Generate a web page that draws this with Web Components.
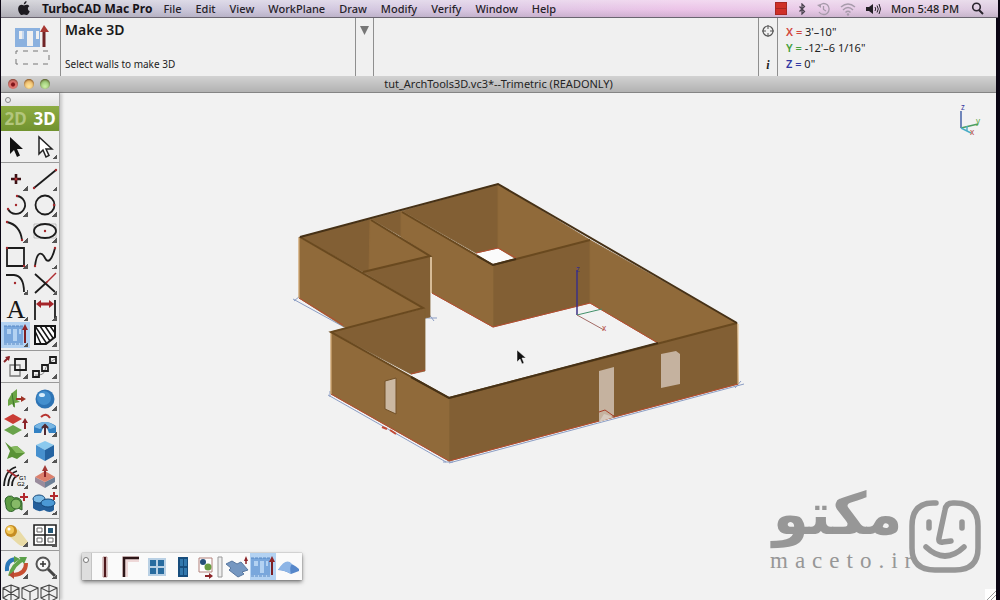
<!DOCTYPE html>
<html lang="en">
<head>
<meta charset="utf-8">
<title>TurboCAD Mac Pro</title>
<style>
html, body { height: 100%; }
body { margin: 0; background: #0b0614; overflow: hidden; font-family: "Noto Sans", "Open Sans", sans-serif; font-size: 11px; color: #222; }
</style>
</head>
<body>
<cad-app></cad-app>
<script>
const define = (name, html, setup) => {
  const tpl = document.createElement('template');
  tpl.innerHTML = html;
  customElements.define(name, class extends HTMLElement {
    connectedCallback() {
      if (this.shadowRoot) return;
      this.attachShadow({ mode: 'open' }).append(tpl.content.cloneNode(true));
      if (setup) setup(this, this.shadowRoot);
    }
  });
};

/* Icon artwork, drawn around the origin in a 28 x 26 box */
const K = 'fill="none" stroke="#1c1c1c" stroke-width="1.8"';
const dot = (x, y) => `<circle cx="${x}" cy="${y}" r="1.2" fill="#a3262a"/>`;
const cube = (x, y, s, a, b, c) => `<g transform="translate(${x} ${y}) scale(${s})"><path d="M0-10 9-6 0-1-9-6z" fill="${a}"/><path d="M-9-6 0-1V10L-9 5z" fill="${b}"/><path d="M9-6 0-1V10L9 5z" fill="${c}"/></g>`;
const wire = extra => `<path d="M0-8 8-5V5L0 9-8 5V-5z${extra}" fill="none" stroke="#444" stroke-width="1.1"/>`;
const make3d = `<path fill-rule="evenodd" d="M-12-9H7V8H-12zM-9-6V-1H-5V-6zM-3-6V6H1V-6zM3-6V-1H5V-6z" fill="#79a7dc"/><path d="M-12-9H8M-12 9H8" stroke="#5688c4" stroke-dasharray="3 1"/><path d="M9 8V-6" stroke="#7d1f22" stroke-width="2"/><path d="M9-11 12-5H6z" fill="#8e2528"/>`;
const art = {
  select: `<path d="M-6-10V7L-2 3 1 10 4 8.500 1 2H7z" fill="#111"/>`,
  direct: `<path d="M-6-10V7L-2 3 1 10 4 8.500 1 2H7z" fill="#fff" stroke="#222" stroke-width="1.500"/>`,
  point: `<path d="M0-5V5M-5 0H5" stroke="#3a1114" stroke-width="2.600"/><circle r="1.5" fill="#b23034"/>`,
  line: `<path d="M-11 9 11-9" ${K}/>${dot(-11,9)}${dot(11,-9)}`,
  arc: `<path d="M-8 4A9 9 0 1 0 1-9" ${K}/>${dot(0,0)}${dot(-8,4)}${dot(1,-9)}`,
  circle: `<circle r="9.500" ${K}/>${dot(9,0)}`,
  curve: `<path d="M-9-9Q4-6 6 9" ${K}/>${dot(-9,-9)}${dot(6,9)}`,
  ellipse: `<path d="M-11-7H11V7H-11z" fill="none" stroke="#aaa" stroke-width=".7"/><ellipse rx="11" ry="7" ${K}/>${dot(0,0)}`,
  rect: `<path d="M-9-9H8V9H-9z" ${K}/>${dot(-9,-9)}${dot(8,9)}`,
  spline: `<path d="M-10 9C-8-7-3-5 0 1S7 3 10-9" ${K}/>${dot(-10,9)}${dot(10,-9)}`,
  fillet: `<path d="M-10-8H-2Q8-7 8 9" ${K}/>${dot(-1,0)}`,
  trim: `<path d="M-10-9 10 9M-10 10 2-1" ${K}/><path d="M1 0 11-10" stroke="#b02e33" stroke-width="1.500"/>`,
  text: `<text y="9" text-anchor="middle" font-family="Liberation Serif, serif" font-size="26" fill="#151515">A</text>`,
  dimension: `<path d="M-10-9V11M10-9V11" ${K}/><path d="M-5-5H5" stroke="#a52429" stroke-width="3"/><path d="M-9-5-4-9V-1zM9-5 4-9V-1z" fill="#a52429"/>`,
  make3d,
  hatch: `<path d="M-10-9H10V2L1 9H-10z" fill="#fff" stroke="#151515" stroke-width="2"/><path d="M-10-4-4 9M-10-9 2 9M-5-9 5 6M0-9 8 3M5-9 10-2" stroke="#151515" stroke-width="1.500"/>`,
  copy: `<path d="M-6-2H4V9H-6z" fill="none" stroke="#777" stroke-width="1.3"/><path d="M-1-8H10V3H-1z" ${K}/><path d="M-12-5-7-10" stroke="#8b2428" stroke-width="2"/><path d="M-6-11-7-6-11-10z" fill="#8b2428"/>`,
  array: `<path d="M-10 8Q-1 9 0 3T10-8" fill="none" stroke="#888"/><path d="M-12 4H-6V10H-12zM-3-2H3V4H-3zM5-10H11V-4H5z" ${K}/>`,
  plane: `<path d="M-4-6 1-10V1L4 3-1 4V9L-4 5-8 7V1z" fill="#6ba545"/><path d="M-4-6-2 8" stroke="#3e762c"/><path d="M0 0H7" stroke="#9e3225" stroke-width="2"/><path d="M10 0 5-3V3z" fill="#9e3225"/>`,
  sphere: `<circle r="9.500" fill="#2d73b4"/><circle cx="-1" cy="-1" r="7" fill="#438fce"/><ellipse cx="-3" cy="-4" rx="3" ry="2" fill="#d8edfb"/>`,
  layers: `<path d="M-3 0 6 5-3 10-12 5z" fill="#69a34b"/><path d="M-3-11 6-6-3-1-12-6z" fill="#ca3c35"/><path d="M9 4V-3" stroke="#8b2428" stroke-width="2"/><path d="M9-7 12-2H6z" fill="#8b2428"/>`,
  revolve: `<path d="M-11 8V1Q0-7 11 1V8H4L2 3H-2L-4 8z" fill="#3281c3"/><path d="M-11 2Q0-8 11 2L5 4Q0-1-5 4z" fill="#78b6e3"/><path d="M0 10V1M-3 3 0 0 3 3" stroke="#512931" stroke-width="2" fill="none"/><path d="M-4-8Q1-13 5-7" fill="none" stroke="#b73430" stroke-width="2"/>`,
  surface: `<path d="M-11-9-5-4 1-5 9 2 1 8-4 6-9 8-6 0z" fill="#599236"/><path d="M-5-4 1-5 9 2 0 2z" fill="#85b95e"/>`,
  cube: cube(0, 0, 1, '#8bc9ee', '#4690ce', '#2463a1'),
  offset: `<path d="M-12 9Q-11-7 0-10M-8 9Q-7-4 1-6M-4 9Q-4 0 3-2" ${K}/><path d="M-9-7 1 0" stroke="#a52f31" stroke-width="2"/><text x="3" y="3" font-size="6">G1</text><text x="1" y="9" font-size="6">G2</text>`,
  extrude: `<path d="M-10 0 0 5V11L-10 5z" fill="#9a8c9d"/><path d="M10 0 0 5V11L10 5z" fill="#6d8097"/><path d="M0-6 10 0 0 5-10 0z" fill="#dc806d"/><path d="M0 0V-8" stroke="#8b2428" stroke-width="2"/><path d="M0-12 3-6H-3z" fill="#a33a36"/>`,
  boolean2d: `<path d="M-11-2A5 5 0 0 1-2-5 6 6 0 0 1 6 0V7L0 4A5 5 0 0 1-10 3z" fill="#5e9c44" stroke="#2d632a"/><circle cx="0" cy="1" r="5" fill="#86b967" stroke="#35692c"/><path d="M8-10V-2M4-6H12" stroke="#b1282d" stroke-width="2"/>`,
  boolean3d: `<path d="M-12-5V5Q-7 10-1 7 5 11 9 7V-3z" fill="#245f9a"/><ellipse cx="-6" cy="-4" rx="6" ry="4" fill="#7bbae5" stroke="#174a7b"/><ellipse cx="3" cy="0" rx="7" ry="4" fill="#4b99d5" stroke="#174a7b"/><path d="M9-11V-3M5-7H13" stroke="#b1282d" stroke-width="2"/>`,
  light: `<path d="M-6 2 2-6 12 7Q7 14 2 9z" fill="#e9dba6"/><circle cx="-5" cy="-4" r="6" fill="#c58d22"/><circle cx="-6" cy="-5" r="4" fill="#f2c758"/><circle cx="-7" cy="-6" r="1.500" fill="#fff"/>`,
  views: `<path d="M-11-10H11V10H-11zM0-10V10M-11 0H11" fill="#fff" stroke="#222" stroke-width="1.600"/><path d="M-8-7H-3V-3H-8zM-8 3H-3V7H-8zM3 3H8V7H3z" fill="none" stroke="#666"/><path d="M3-7H8V-2H3z" fill="#245777"/>`,
  orbit: `<path d="M-9 4Q-10-7 0-8" fill="none" stroke="#2a77b8" stroke-width="4"/><path d="M-6 9Q-3-3 8-8" fill="none" stroke="#62a44b" stroke-width="4"/><path d="M10-4Q10 7-2 8" fill="none" stroke="#c84f32" stroke-width="4"/><path d="M-2-11 4-8-2-4zM3-10H11L8-3z" fill="#5ba04a"/><path d="M-2 4V12L-7 8z" fill="#b84732"/>`,
  zoom: `<circle cx="-2" cy="-3" r="6.500" fill="#f8f8f8" stroke="#555" stroke-width="2"/><path d="M3 2 10 9" stroke="#444" stroke-width="3"/><path d="M-2-6V0M-5-3H1" stroke="#333" stroke-width="1.500"/>`,
  wireA: wire('M-8-5 8 5M8-5-8 5M0-8V9'),
  wireB: wire('M-8-5 0-1 8-5M0-1V9'),
  wireC: wire('M-8-5 0-1 8-5M0-1V9M0-8V1M-8 5 0 1 8 5'),
  wall: `<path d="M-2-10V10H2V-10z" fill="#e7dcdc" stroke="#a06b6b" stroke-width=".7"/><path d="M0-10V10" stroke="#4d171b" stroke-width="2"/>`,
  corner: `<path d="M-6 10V-8H8" fill="none" stroke="#eed8d8" stroke-width="6"/><path d="M-7 10V-9H8" fill="none" stroke="#2c1517" stroke-width="2.500"/>`,
  window: `<path d="M-9-9H9V9H-9z" fill="#b9d0e4"/><path d="M-7-7H-1V-1H-7zM1-7H7V-1H1zM-7 1H-1V7H-7zM1 1H7V7H1z" fill="#286b9f"/>`,
  door: `<path d="M-5-10H5V10H-5z" fill="#174d7d"/><path d="M-3-8H0V-1H-3zM1-8H4V-1H1zM-3 1H0V8H-3zM1 1H4V8H1z" fill="#3278ad"/>`,
  insert: `<path d="M-7-9H6V5H-7z" fill="#fff" stroke="#b1807b"/><circle cx="-3" cy="-5" r="3" fill="#254f7b"/><circle cx="2" cy="0" r="3.500" fill="#699c42"/><path d="M-1 9H4" stroke="#8b2428" stroke-width="2"/><path d="M7 9 3 6V12z" fill="#8b2428"/>`,
  slot: `<path d="M-2-10H2V10H-2z" fill="#eee" stroke="#999"/>`,
  slab: `<path d="M-11-3-5-6 0-3 4-5 11 3 5 5 7 7 1 10-8 3-6 1z" fill="#7597c1" stroke="#5877a0"/><path d="M9-3V-8" stroke="#8b2428" stroke-width="1.500"/><path d="M9-11 11-6H7z" fill="#8b2428"/>`,
  roof: `<path d="M-11 3Q-3-10 10 2L10 4 2 7Q-5 3-11 3z" fill="#5687ca"/><path d="M-11 3Q-3-10 3-3 0 0 2 7-5 3-11 3z" fill="#8db5e6"/>`
};
const icon = name => `<svg viewBox="-14 -13 28 26" aria-hidden="true">${art[name]}</svg>`;

define('tool-button', `
<style>
:host { display: block; }
button { position: relative; display: flex; justify-content: center; align-items: center; width: 100%; height: 100%; margin: 0; padding: 0; border: 0; background: none; }
svg { display: block; flex: none; width: 28px; height: 26px; overflow: visible; font-family: "Noto Sans", sans-serif; }
:host([selected]) button { background: #b3d2f2; }
:host([more]) button::after { content: ""; position: absolute; right: 2px; bottom: 1px; width: 5px; height: 5px; background: linear-gradient(135deg, transparent 50%, #555 50%); }
</style><button type="button"></button>`, (el, root) => {
  const b = root.querySelector('button');
  b.setAttribute('aria-label', el.getAttribute('icon'));
  b.innerHTML = icon(el.getAttribute('icon'));
});

define('menu-bar', `
<style>
:host { display: flex; align-items: center; height: 17px; padding: 0 14px 0 16px; margin-right: 2px; border-bottom: 1px solid #69646f;
  background: linear-gradient(rgba(255,255,255,.35), rgba(255,255,255,0) 55%, rgba(60,50,70,.14)), linear-gradient(90deg, #c2c2c8, #ccc8dc 20%, #d8c8e2 45%, #ecc4e8 68%, #e9cbe8 82%, #dccbe0); }
nav { display: flex; gap: 14px; flex: 1; }
button { all: unset; display: block; line-height: 17px; font-size: 11px; font-weight: 500; color: #262229; white-space: nowrap; }
button.app { font-size: 12px; font-weight: 700; color: #161318; margin-right: -3px; }
svg { display: block; }
.status { display: flex; align-items: center; gap: 10px; white-space: nowrap; line-height: 17px; font-weight: 500; }
.status span { margin-right: 2px; }
.apple { margin-right: 11px; }
</style>
<svg class="apple" width="14" height="15" viewBox="0 0 14 15"><path d="M9.500 0C7.500.6 6.700 2 6.800 3.500 8.600 3.300 9.700 1.800 9.500 0zM7 4.500C5.500 4 4 3.300 2.500 4.600.4 6.500 1 10 2.700 12.500 4 14.500 5 14 7 13.600c2 .5 3 1 4.400-.9.7-1 1.100-1.800 1.300-2.500-2.200-1-2.400-3.900-.3-5C11 3.300 8.800 3.800 7 4.500z" fill="#1c1a20"/></svg>
<nav></nav>
<div class="status">
<svg width="12" height="13" viewBox="0 0 12 13"><path d="M0 0H12V13H0z" fill="#a82622"/><path d="M1 1H11V6H1zM1 7H11V12H1z" fill="#cf2f28"/></svg>
<svg width="10" height="12" viewBox="0 0 12 14"><path d="M3 4 9 10 6 13V1L9 4 3 10" fill="none" stroke="#4a434f" stroke-width="1.500"/></svg>
<svg width="13" height="14" viewBox="0 0 13 14"><path d="M2 4A5.500 5.500 0 1 1 2 10M6.500 4V7.500L9 9" fill="none" stroke="#a79bab" stroke-width="1.300"/><path d="M0 3 4 2 4 6z" fill="#a79bab"/></svg>
<svg width="16" height="14" viewBox="0 0 16 14"><path d="M1 5Q8-1 15 5M3 8Q8 3 13 8M5.500 10.500Q8 8 10.500 10.500" fill="none" stroke="#a79bab" stroke-width="1.500"/><circle cx="8" cy="12.500" r="1.200" fill="#a79bab"/></svg>
<svg width="15" height="12" viewBox="0 0 15 12"><path d="M0 4H3L7 1V11L3 8H0z" fill="#242026"/><path d="M9 4Q10.500 6 9 8M11 2.500Q13.500 6 11 9.500M13 1Q16 6 13 11" fill="none" stroke="#242026"/></svg>
<span>Mon 5:48 PM</span>
<svg width="13" height="13" viewBox="0 0 13 13"><circle cx="5.500" cy="5" r="3.800" fill="none" stroke="#29242d" stroke-width="1.600"/><path d="M8 8 12 12" stroke="#29242d" stroke-width="2"/></svg>
</div>`, (el, root) => {
  root.querySelector('nav').innerHTML = ['TurboCAD Mac Pro','File','Edit','View','WorkPlane','Draw','Modify','Verify','Window','Help']
    .map((t, i) => `<button type="button"${i ? '' : ' class="app"'}>${t}</button>`).join('');
});

define('tool-info', `
<style>
:host { display: grid; grid-template-columns: 59px 295px 18px 1fr 19px 219px; height: 58px; background: #f0f0f0; }
:host > * { box-sizing: border-box; }
div + div { border-left: 1px solid #8f8f8f; }
.art svg { display: block; margin: 6px 0 0 12px; }
.hint { display: flex; flex-direction: column; justify-content: space-between; padding: 1px 0 4px 4px; }
h1 { margin: 0; font-size: 14px; line-height: 22px; font-weight: 600; color: #1a1a1a; }
p { margin: 0; font-size: 10px; line-height: 16px; }
button { all: unset; display: block; margin: 8px auto 0; width: 9px; height: 9px; }
button svg, .side svg { display: block; }
.side { display: flex; flex-direction: column; align-items: center; justify-content: space-between; padding: 7px 0 4px; }
i { font: italic bold 12px/14px "Liberation Serif", serif; }
.coords { padding: 6px 0 0 8px; font-size: 11px; line-height: 16px; }
b { font-weight: 600; } .x { color: #d2473c; } .y { color: #45a03c; } .z { color: #3239a3; }
</style>
<div class="art"><svg width="38" height="44" viewBox="0 0 38 44"><path fill-rule="evenodd" d="M2 4H27V23H2zM6 7V15H9V7zM14 7V22H20V7zM23 7V15H26V7z" fill="#8bb1df"/><path d="M10 7V15" stroke="#fff"/><path d="M31 23V6" stroke="#702426" stroke-width="3"/><path d="M31 1 36 8H27z" fill="#a83832"/><path d="M3 40V27H36V40z" fill="none" stroke="#777" stroke-dasharray="5 5"/></svg></div>
<div class="hint"><h1>Make 3D</h1><p>Select walls to make 3D</p></div>
<div><button type="button" aria-label="Tool options"><svg width="9" height="9"><path d="M0 0H9L4.500 9z" fill="#777"/></svg></button></div>
<div></div>
<div class="side"><svg width="12" height="12" viewBox="0 0 12 12"><circle cx="6" cy="6" r="5" fill="none" stroke="#555" stroke-width="1.200"/><path d="M6 0V4M6 8V12M0 6H4M8 6H12" stroke="#555"/></svg><i>i</i></div>
<div class="coords"><span><b class="x">X =</b> 3'–10"</span><br><span><b class="y">Y =</b> -12'–6 1/16"</span><br><span><b class="z">Z =</b> 0"</span></div>`);

define('title-bar', `
<style>
:host { display: grid; grid-template-columns: 1fr auto 1fr; align-items: center; height: 17px; box-sizing: border-box; border-bottom: 1px solid #858585; background: linear-gradient(#d2d2d2, #b2b2b2); font-size: 11px; line-height: 16px; color: #242424; }
div { display: flex; gap: 6px; padding-left: 7px; }
button { all: unset; width: 10px; height: 10px; border-radius: 50%; box-shadow: inset 0 1px 2px rgba(60,20,0,.65); }
button:nth-child(1) { background: radial-gradient(circle at 50% 55%, #80151b 20%, #df706b 35%, #e79a8f); }
button:nth-child(2) { background: radial-gradient(circle at 50% 75%, #ffe69c, #e6a34e); }
button:nth-child(3) { background: radial-gradient(circle at 50% 75%, #cdf0a6, #76ae54); }
</style>
<div><button type="button" aria-label="Close"></button><button type="button" aria-label="Minimize"></button><button type="button" aria-label="Zoom"></button></div><span><slot></slot></span>`);

define('tool-palette', `
<style>
:host { display: block; overflow: hidden; background: #efefef; border-right: 1px solid #aaa; box-shadow: 2px 0 3px rgba(0,0,0,.18); }
header { height: 13px; padding-left: 4px; background: linear-gradient(#f4f4f4, #e2e2e2); display: flex; align-items: center; }
header::before { content: ""; width: 4px; height: 4px; border: 1px solid #888; border-radius: 50%; }
.mode { display: grid; grid-template-columns: 1fr 1fr; height: 25px; background: linear-gradient(#8dac43, #71922f); }
.mode button { all: unset; text-align: center; font-weight: 700; font-size: 17px; line-height: 25px; color: #fff; }
.mode button:first-child { color: #b3c67d; }
section { display: grid; grid-template-columns: 1fr 1fr; grid-auto-rows: 26px; padding: 3px 0 2px; border-bottom: 1px solid #999; }
section:last-child { grid-template-columns: repeat(6, 1fr); border: 0; }
section:last-child tool-button { grid-column: span 2; }
section:last-child tool-button:nth-child(-n+2) { grid-column: span 3; }
</style><header></header><div class="mode"><button type="button">2D</button><button type="button">3D</button></div>`, (el, root) => {
  const plain = ['select', 'wireA', 'wireB', 'wireC'];
  for (const list of ['select direct', 'point line arc circle curve ellipse rect spline fillet trim text dimension make3d hatch', 'copy array',
    'plane sphere layers revolve surface cube offset extrude boolean2d boolean3d', 'light views', 'orbit zoom wireA wireB wireC']) {
    const s = document.createElement('section');
    s.innerHTML = list.split(' ').map(n => `<tool-button icon="${n}"${plain.includes(n) ? '' : ' more'}${n === 'make3d' ? ' selected' : ''}></tool-button>`).join('');
    root.append(s);
  }
});

define('arch-toolbar', `
<style>
:host { display: flex; height: 27px; background: #fafafa; box-shadow: 0 2px 4px rgba(0,0,0,.5), 0 0 1px #888; }
.grip { width: 9px; background: #dedede; border-right: 1px solid #c4c4c4; }
.grip::before { content: ""; display: block; width: 4px; height: 4px; margin: 4px 1px; border: 1px solid #777; border-radius: 50%; background: #fff; }
tool-button { width: 26px; }
tool-button[icon=insert] { width: 20px; } tool-button[icon=slot] { width: 8px; }
</style><div class="grip"></div>`, (el, root) => {
  root.innerHTML += 'wall corner window door insert slot slab make3d roof'.split(' ')
    .map(n => `<tool-button icon="${n}"${n === 'make3d' ? ' selected' : ''}></tool-button>`).join('');
});

define('model-view', `
<style>
:host { display: block; overflow: hidden; background: #f2f2f2; }
svg { display: block; width: 100%; height: 100%; font-family: "Noto Sans", sans-serif; font-size: 8px; }
</style>
<svg viewBox="60 93 936 507" preserveAspectRatio="xMidYMid meet" role="img" aria-label="Trimetric view of a floor plan with walls">
<g fill="none" stroke="#8b9dc4" stroke-width="1">
<path d="M293 299 344 327M328 395 446 462M443 462H453M449 463 744 384M425 318H437M735 388 741 381M294 301 300 296M330 391V397M428 313 434 321"/></g>
<path d="M476 253 498 248 516 258 493 265z" fill="#fbfbfb"/>
<g fill="#825f34" stroke="#825f34" stroke-width=".8">
<path d="M300 237 370 219V270L363 272zM371 219 402 211V237zM402 211 498 184V248L476 253zM493 265 590 240V303L493 327zM363 272 430 256V317L425 318V309zM331 332 425 308V371L411 374zM449 398 737 323 738 384 449 461z"/></g>
<g fill="#906a3a" stroke="#906a3a" stroke-width=".8">
<path d="M299 237 424 308 346 328 299 298zM370 219 430 256 363 272 369 270zM401 211 493 265V327L432 293V257L401 237zM498 184 590 240 516 259 498 248zM590 240 737 323 658 343 590 303zM331 332 449 398V461L331 394z"/></g>
<g fill="none" stroke="#b64b30" stroke-width="1"><path d="M432 293 493 327 590 303 658 343M449 461 738 384M299 298 343 325M331 394 449 461M411 374 425 370M476 253 498 248 516 258"/></g>
<g fill="none" stroke="#e6bd87" stroke-width="1"><path d="M299 238V298M331 332V394M431 257V293M738 324V384"/></g>
<g fill="none" stroke="#69491f" stroke-width="2"><path d="M300 237 423 308 331 332 449 398M371 220 430 256 363 272M402 212 493 265 590 240M449 398 737 323"/></g>
<path d="M300 237 498 184 737 323M411 377 449 398 658 343M477 256 493 265 516 259" fill="none" stroke="#463116" stroke-width="2"/>
<path d="M385 381 396 378V414L385 409z" fill="#cbb8a2" stroke="#725128"/>
<path d="M599 371 614 367V415L599 422z" fill="#c5b29f"/><path d="M599 412 605 410 615 417" fill="none" stroke="#a83e29"/><path d="M599 422 604 414 614 417z" fill="#d6c9bd"/>
<path d="M661 354 676 351 680 354V384L661 388z" fill="#c5b29f"/>
<path d="M382 427 387 429M390 430 396 434" stroke="#c34935" stroke-width="2"/>
<g fill="none"><path d="M577 315V270" stroke="#3b3185" stroke-width="1.500"/><path d="M577 315 602 309" stroke="#42906a"/><path d="M577 315 604 330" stroke="#a26b66"/></g>
<text x="576" y="272" fill="#3b3185">z</text><text x="602" y="331" fill="#b34440">x</text>
<g fill="none"><path d="M961 128V111" stroke="#3958a2" stroke-width="1.400"/><path d="M961 128 978 124" stroke="#4b9e62" stroke-width="1.400"/><path d="M961 128 971 133M967 126V131" stroke="#4badc7" stroke-width="1.400"/></g>
<text x="961" y="110" fill="#3939a0">z</text><text x="976" y="124" fill="#55a63e">y</text><text x="970" y="135" fill="#b5443a">x</text>
<path d="M517 350V362L520 359 522 364 524 363 522 358H526z" fill="#111" stroke="#fff" stroke-width=".5"/>
</svg>`);

define('site-mark', `
<style>
:host { display: flex; color: #979797; }
.words { width: 142px; margin: -20px -3px 0 0; white-space: nowrap; }
.fa { width: 135px; font: bold 58px/68px "DejaVu Sans", sans-serif; direction: rtl; text-align: center; }
.en { font: 23px/26px "Liberation Serif", serif; letter-spacing: 7px; }
svg { display: block; position: relative; flex: none; }
</style>
<div class="words"><div class="fa" lang="fa">مكتو</div><div class="en">maceto.ir</div></div>
<svg width="72" height="74" viewBox="0 0 72 74"><path d="M27 3H24Q3 3 3 26V48Q3 70 26 70H46Q69 70 69 48V26Q69 3 46 3H44Q37 3 36 10L30 38Q29 43 34 42L42 41" fill="#f2f2f2" stroke="#979797" stroke-width="5.500" stroke-linecap="round" stroke-linejoin="round"/><path d="M20 22V28M53 22V28" stroke="#979797" stroke-width="5.500" stroke-linecap="round"/><path d="M17 47Q36 65 55 47" fill="none" stroke="#979797" stroke-width="5.500" stroke-linecap="round"/></svg>`);

define('cad-app', `
<style>
:host { display: flex; flex-direction: column; height: 100vh; padding-left: 1px; box-sizing: border-box; }
tool-info, title-bar, main { margin-right: 4px; }
main { position: relative; flex: 1; min-height: 0; display: grid; grid-template-columns: 59px 1fr; grid-template-rows: minmax(0, 1fr); }
tool-palette { z-index: 1; }
arch-toolbar { position: absolute; left: 81px; bottom: 20px; }
site-mark { position: absolute; right: 15px; bottom: 26px; }
.grow { position: absolute; right: 0; bottom: 0; }
</style>
<menu-bar></menu-bar><tool-info></tool-info><title-bar>tut_ArchTools3D.vc3*--Trimetric (READONLY)</title-bar>
<main><tool-palette></tool-palette><model-view></model-view><arch-toolbar></arch-toolbar><site-mark></site-mark>
<svg class="grow" width="11" height="11"><path d="M0 0H11V11H0z" fill="#fff"/><path d="M2 11 11 2M6 11 11 6" stroke="#999"/></svg></main>`);
</script>
</body>
</html>
